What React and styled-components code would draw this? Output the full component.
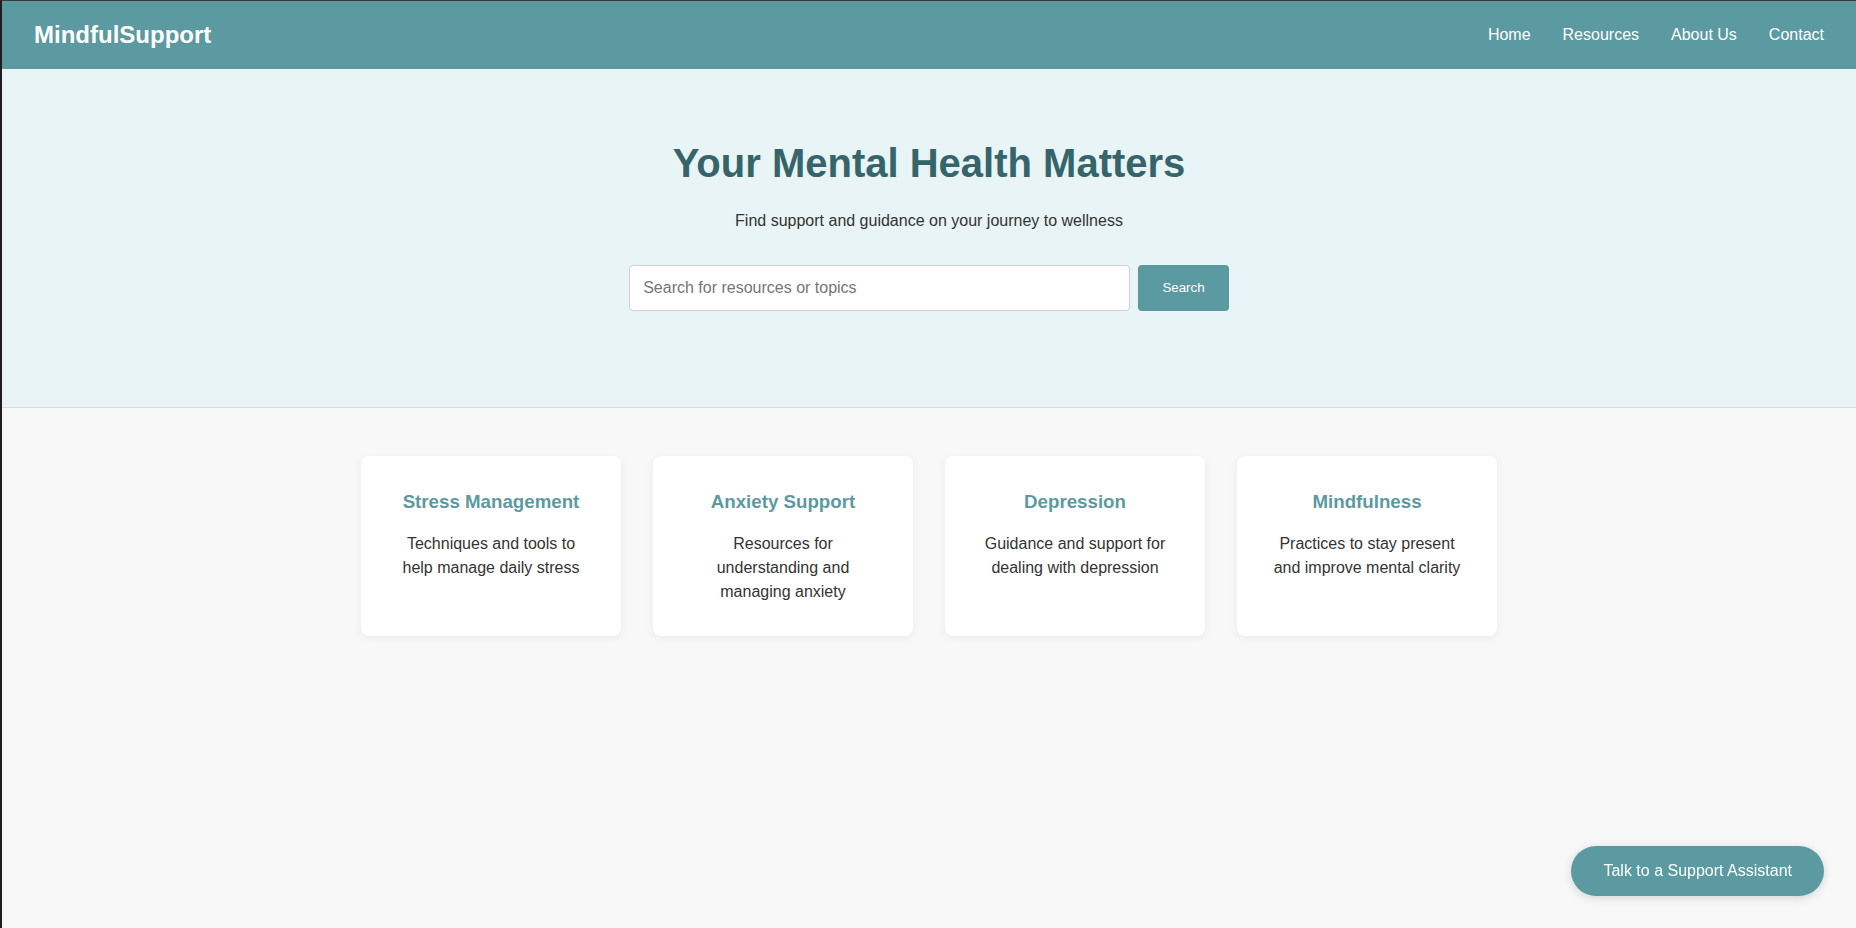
import React from "react";
import styled, { createGlobalStyle } from "styled-components";

const GlobalStyle = createGlobalStyle`
  * { box-sizing: border-box; }
  html, body { margin: 0; padding: 0; }
  body {
    font-family: "Liberation Sans", Arial, sans-serif;
    line-height: 1.5;
    color: #333;
    background: #1e1e1e;
  }
`;

const Frame = styled.div`
  min-height: 928px;
  border-top: 1px solid #3a3a3a;
  border-left: 2px solid #1e1e1e;
  background: #f8f8f8;
`;

const Header = styled.header`
  display: flex;
  align-items: center;
  justify-content: space-between;
  padding: 1rem 2rem;
  background: #5b9aa0;
  color: #fff;
`;

const Logo = styled.div`
  font-size: 24px;
  font-weight: 700;
`;

const Nav = styled.nav`
  display: flex;
  gap: 2rem;
`;

const NavLink = styled.a`
  color: #fff;
  text-decoration: none;
  font-size: 16px;
`;

const Hero = styled.section`
  background: #e8f4f5;
  border-bottom: 1px solid #d5dddd;
  padding: 4rem 2rem 6rem;
  text-align: center;
`;

const Title = styled.h1`
  margin: 0 0 1rem;
  font-size: 2.5rem;
  color: #35656a;
`;

const Subtitle = styled.p`
  margin: 0 0 2rem;
  font-size: 16px;
`;

const SearchRow = styled.form`
  display: flex;
  justify-content: center;
  gap: 8px;
`;

const SearchInput = styled.input`
  width: 501px;
  padding: 0.8rem;
  font-family: "Liberation Sans", Arial, sans-serif;
  font-size: 16px;
  border: 1px solid #cfd3d4;
  border-radius: 4px;
  background: #fff;
  color: #333;
  &::placeholder { color: #767676; }
`;

const SearchButton = styled.button`
  padding: 0.8rem 1.5rem;
  font-family: "Liberation Sans", Arial, sans-serif;
  font-size: 13.33px;
  background: #5b9aa0;
  color: #fff;
  border: none;
  border-radius: 4px;
`;

const Main = styled.main`
  max-width: 1200px;
  margin: 0 auto;
  padding: 3rem 2rem;
`;

const Grid = styled.div`
  display: grid;
  grid-template-columns: repeat(4, 1fr);
  gap: 2rem;
`;

const Card = styled.div`
  background: #fff;
  border-radius: 8px;
  padding: 2rem;
  text-align: center;
  box-shadow: 0 2px 10px rgba(0, 0, 0, 0.06);
`;

const CardTitle = styled.h3`
  margin: 0 0 1rem;
  font-size: 1.17em;
  color: #5b9aa0;
`;

const CardText = styled.p`
  margin: 0;
  font-size: 16px;
`;

const FloatButton = styled.button`
  position: fixed;
  right: 32px;
  bottom: 32px;
  padding: 1rem 2rem;
  font-family: "Liberation Sans", Arial, sans-serif;
  font-size: 16px;
  background: #5b9aa0;
  color: #fff;
  border: none;
  border-radius: 30px;
  box-shadow: 0 2px 10px rgba(0, 0, 0, 0.15);
`;

const cards = [
  { title: "Stress Management", text: "Techniques and tools to help manage daily stress" },
  { title: "Anxiety Support", text: "Resources for understanding and managing anxiety" },
  { title: "Depression", text: "Guidance and support for dealing with depression" },
  { title: "Mindfulness", text: "Practices to stay present and improve mental clarity" },
];

export default function App() {
  return (
    <>
      <GlobalStyle />
      <Frame>
        <Header>
          <Logo>MindfulSupport</Logo>
          <Nav>
            <NavLink href="#">Home</NavLink>
            <NavLink href="#">Resources</NavLink>
            <NavLink href="#">About Us</NavLink>
            <NavLink href="#">Contact</NavLink>
          </Nav>
        </Header>
        <Hero>
          <Title>Your Mental Health Matters</Title>
          <Subtitle>Find support and guidance on your journey to wellness</Subtitle>
          <SearchRow onSubmit={(e) => e.preventDefault()}>
            <SearchInput placeholder="Search for resources or topics" />
            <SearchButton type="submit">Search</SearchButton>
          </SearchRow>
        </Hero>
        <Main>
          <Grid>
            {cards.map((c) => (
              <Card key={c.title}>
                <CardTitle>{c.title}</CardTitle>
                <CardText>{c.text}</CardText>
              </Card>
            ))}
          </Grid>
        </Main>
        <FloatButton>Talk to a Support Assistant</FloatButton>
      </Frame>
    </>
  );
}
